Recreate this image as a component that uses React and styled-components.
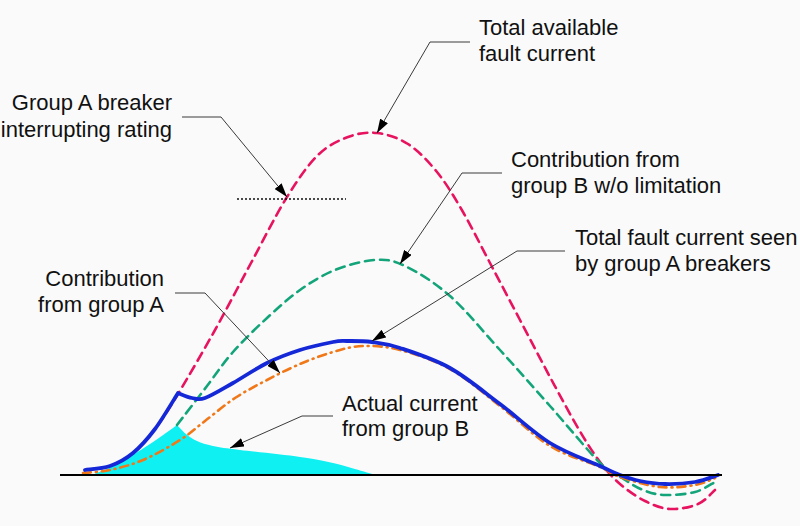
import React from "react";
import styled, { createGlobalStyle } from "styled-components";

const Global = createGlobalStyle`
  html, body { margin: 0; padding: 0; background: #fafafa; }
  #root { width: 800px; height: 526px; }
`;

const Frame = styled.div`
  width: 800px;
  height: 526px;
  background: #fafafa;
  overflow: hidden;
`;

const Chart = styled.svg`
  display: block;
  width: 800px;
  height: 526px;
`;

const Label = styled.text`
  font-family: "Liberation Sans", Arial, sans-serif;
  font-size: 22px;
  fill: #111;
`;

const Curve = styled.path`
  fill: none;
  stroke: ${(p) => p.$color};
  stroke-width: ${(p) => p.$width || 2.5};
  stroke-dasharray: ${(p) => p.$dash || "none"};
  stroke-linecap: round;
  stroke-linejoin: round;
`;

const Fill = styled.path`
  fill: #0ff0f2;
  stroke: none;
`;

const Leader = styled.polyline`
  fill: none;
  stroke: #3a3a3a;
  stroke-width: 1;
`;

const Axis = styled.line`
  stroke: #000;
  stroke-width: 2;
`;

const Rating = styled.line`
  stroke: #111;
  stroke-width: 1.5;
  stroke-dasharray: 2 2;
`;

function smooth(pts, cont = false) {
  let d = cont ? `L${pts[0][0]},${pts[0][1]}` : `M${pts[0][0]},${pts[0][1]}`;
  for (let i = 0; i < pts.length - 1; i++) {
    const p0 = pts[i - 1] || pts[i];
    const p1 = pts[i];
    const p2 = pts[i + 1];
    const p3 = pts[i + 2] || p2;
    const c1x = p1[0] + (p2[0] - p0[0]) / 6;
    const c1y = p1[1] + (p2[1] - p0[1]) / 6;
    const c2x = p2[0] - (p3[0] - p1[0]) / 6;
    const c2y = p2[1] - (p3[1] - p1[1]) / 6;
    d += ` C${c1x.toFixed(1)},${c1y.toFixed(1)} ${c2x.toFixed(1)},${c2y.toFixed(1)} ${p2[0]},${p2[1]}`;
  }
  return d;
}

const blueA = [[85, 470], [110, 466], [133, 453], [155, 429], [178, 393]];
const blueB = [
  [178, 393], [192, 398], [205, 398], [233, 383], [267, 363], [300, 350],
  [333, 342], [347, 341], [372, 342], [400, 348], [450, 368], [500, 404],
  [550, 443], [600, 466], [620, 475], [640, 481], [665, 484], [695, 482], [718, 475],
];

const red = [
  [85, 470], [110, 466], [133, 453], [155, 429], [178, 394], [215, 330],
  [251, 263], [287, 197], [318, 155], [348, 137], [377, 133], [408, 144],
  [437, 172], [463, 212], [490, 263], [520, 320], [550, 377], [578, 428],
  [600, 462], [620, 484], [645, 501], [670, 509], [698, 504], [715, 490],
];

const green = [
  [177, 425], [207, 386], [233, 352], [267, 318], [300, 290], [335, 270],
  [375, 260], [405, 266], [450, 296], [500, 350], [550, 406], [600, 463],
  [622, 478], [643, 490], [665, 495], [695, 492], [715, 482],
];

const orange = [
  [83, 473], [110, 470], [143, 460], [180, 440], [205, 421], [235, 398],
  [267, 380], [300, 364], [333, 352], [363, 346], [400, 350], [450, 369],
  [500, 406], [550, 446], [600, 467], [620, 477], [660, 487], [695, 485], [715, 478],
];

const cyanL = [[92, 475], [117, 464], [150, 444], [177, 425]];
const cyanR = [
  [177, 425], [186, 434], [197, 441], [213, 446], [240, 450], [300, 457],
  [333, 463], [355, 469], [376, 475],
];

const leaders = [
  "470,42 430,42 377,133",
  "182,117 221,117 287,197",
  "502,173 462,173 400,264",
  "565,251 517,251 372,341",
  "175,293 205,293 280,373",
  "333,416 302,416 230,448",
];

const labels = [
  { x: 479, y: 35, t: "Total available" },
  { x: 479, y: 61, t: "fault current" },
  { x: 172, y: 110, t: "Group A breaker", end: true },
  { x: 172, y: 137, t: "interrupting rating", end: true },
  { x: 511, y: 167, t: "Contribution from" },
  { x: 511, y: 193, t: "group B w/o limitation" },
  { x: 575, y: 245, t: "Total fault current seen" },
  { x: 575, y: 271, t: "by group A breakers" },
  { x: 164, y: 286, t: "Contribution", end: true },
  { x: 164, y: 312, t: "from group A", end: true },
  { x: 342, y: 411, t: "Actual current" },
  { x: 342, y: 436, t: "from group B" },
];

export default function App() {
  return (
    <Frame>
      <Global />
      <Chart viewBox="0 0 800 526">
        <defs>
          <marker
            id="arr"
            viewBox="0 0 14 9"
            refX="14"
            refY="4.5"
            markerWidth="14"
            markerHeight="9"
            markerUnits="userSpaceOnUse"
            orient="auto"
          >
            <path d="M0,0 L14,4.5 L0,9 z" fill="#000" />
          </marker>
        </defs>

        <Fill d={smooth(cyanL) + " " + smooth(cyanR, true) + " Z"} />

        <Curve d={smooth(red)} $color="#e8135f" $width={2.6} $dash="9 6" />
        <Curve d={smooth(green)} $color="#13a47a" $width={2.6} $dash="9 6" />
        <Curve d={smooth(orange)} $color="#f07818" $width={2.6} $dash="8 5 1 5" />
        <Curve d={smooth(blueA) + " " + smooth(blueB, true)} $color="#1428d8" $width={3.8} />

        <Axis x1="60" y1="475" x2="722" y2="475" />
        <Rating x1="237" y1="199" x2="346" y2="199" />

        {leaders.map((p) => (
          <Leader key={p} points={p} markerEnd="url(#arr)" />
        ))}

        {labels.map((l) => (
          <Label key={l.t} x={l.x} y={l.y} textAnchor={l.end ? "end" : "start"}>
            {l.t}
          </Label>
        ))}
      </Chart>
    </Frame>
  );
}
